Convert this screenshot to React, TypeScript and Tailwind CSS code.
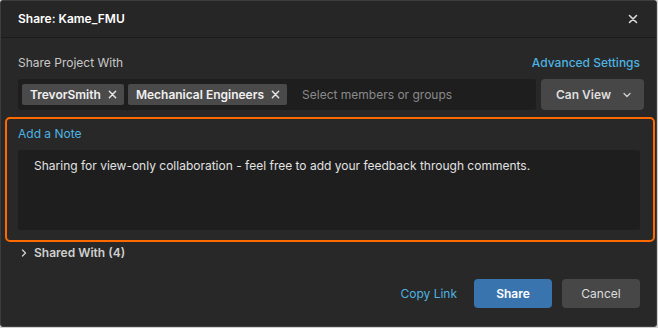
import { useState } from "react";

function CloseIcon({ className }: { className?: string }): JSX.Element {
  return (
    <svg viewBox="0 0 10 10" className={className} fill="none">
      <path d="M1.5 1.5l7 7M8.5 1.5l-7 7" stroke="currentColor" strokeWidth="1.6" strokeLinecap="round" />
    </svg>
  );
}

function Chevron({ dir, className }: { dir: "down" | "right"; className?: string }): JSX.Element {
  return (
    <svg viewBox="0 0 10 10" className={className} fill="none">
      <path
        d={dir === "down" ? "M2 3.5l3 3 3-3" : "M3.5 2l3 3-3 3"}
        stroke="currentColor"
        strokeWidth="1.3"
        strokeLinecap="round"
        strokeLinejoin="round"
      />
    </svg>
  );
}

function Chip({ label }: { label: string }): JSX.Element {
  return (
    <span className="flex h-[21px] items-center gap-[7px] rounded-[2px] bg-[#4a4a4a] pl-[8px] pr-[7px] text-[12px] font-semibold text-[#f0f0f0]">
      {label}
      <CloseIcon className="h-[9px] w-[9px] text-[#e6e6e6]" />
    </span>
  );
}

export default function App(): JSX.Element {
  const [note, setNote] = useState(
    "Sharing for view-only collaboration - feel free to add your feedback through comments."
  );

  return (
    <div
      className="h-[328px] w-[658px] bg-[#cfcfcf]"
      style={{ fontFamily: "Inter, 'Noto Sans', sans-serif" }}
    >
      <div className="flex h-[327px] w-[657px] flex-col rounded-[3px] border border-[#3d3d3d] bg-[#282828]">
        <div className="flex h-[37px] shrink-0 items-center justify-between border-b border-[#1b1b1b] bg-[#262626] pl-[17px] pr-[18px]">
          <span className="text-[12px] font-semibold text-white">Share: Kame_FMU</span>
          <CloseIcon className="h-[10px] w-[10px] text-[#dcdcdc]" />
        </div>

        <div className="flex flex-1 flex-col pl-[17px] pr-[16px]">
          <div className="mt-[15px] flex h-[20px] items-center justify-between">
            <span className="text-[12px] text-[#c9c9c9]">Share Project With</span>
            <a href="#" className="text-[12px] font-medium text-[#4db3e2]">
              Advanced Settings
            </a>
          </div>

          <div className="mt-[6px] mr-[-4px] flex h-[31px] gap-[5px]">
            <div className="flex flex-1 items-center gap-[4px] rounded-[3px] bg-[#1e1e1e] pl-[4px]">
              <Chip label="TrevorSmith" />
              <Chip label="Mechanical Engineers" />
              <span className="ml-[11px] text-[12px] text-[#8a8a8a]">Select members or groups</span>
            </div>
            <button className="flex w-[103px] items-center gap-[11px] rounded-[4px] bg-[#474747] pl-[15px] text-[12px] font-semibold text-[#dedede]">
              Can View
              <Chevron dir="down" className="h-[10px] w-[10px] text-[#cfcfcf]" />
            </button>
          </div>

          <div className="mt-[7px] ml-[-13px] mr-[-15px] rounded-[5px] border-2 border-[#ff6a00] pb-[10px] pl-[11px] pr-[13px] pt-[6px]">
            <div className="flex h-[18px] items-center text-[12px] text-[#4db3e2]">Add a Note</div>
            <textarea
              value={note}
              onChange={(e) => setNote(e.target.value)}
              className="mt-[7px] block h-[80px] w-full resize-none rounded-[3px] bg-[#1e1e1e] px-[16px] pt-[7px] text-[12px] leading-[18px] text-[#e2e2e2] outline-none"
            />
          </div>

          <div className="mt-[2px] flex h-[18px] items-center gap-[5px] pl-[1px] text-[12px] font-semibold text-[#cfcfcf]">
            <Chevron dir="right" className="h-[10px] w-[10px] text-[#cfcfcf]" />
            Shared With (4)
          </div>

          <div className="mt-auto mb-[18px] flex items-center justify-end">
            <a href="#" className="mr-[17px] text-[12px] text-[#4db3e2]">
              Copy Link
            </a>
            <button className="h-[29px] w-[78px] rounded-[4px] bg-[#3a74ae] text-[12px] font-semibold text-white">
              Share
            </button>
            <button className="ml-[10px] h-[29px] w-[78px] rounded-[4px] bg-[#474747] text-[12px] text-[#dedede]">
              Cancel
            </button>
          </div>
        </div>
      </div>
    </div>
  );
}
